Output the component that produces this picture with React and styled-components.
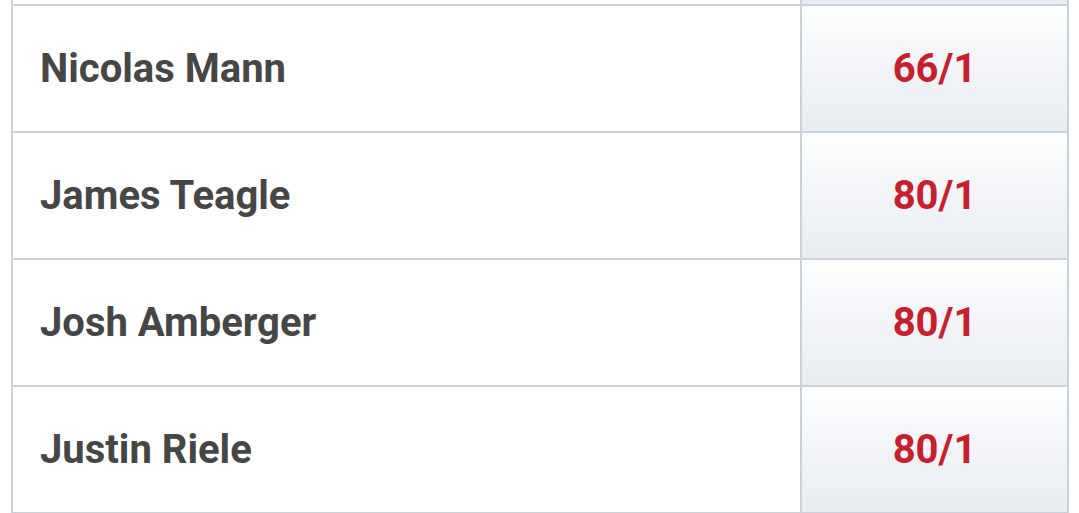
import React from "react";
import styled, { createGlobalStyle } from "styled-components";

const Global = createGlobalStyle`
  html, body { margin: 0; padding: 0; background: #ffffff; overflow: hidden; }
  body { font-family: Roboto, "Noto Sans", sans-serif; }
`;

const Viewport = styled.div`
  width: 1079px;
  height: 513px;
  overflow: hidden;
  background: #ffffff;
`;

const Table = styled.div`
  margin-left: 11px;
  width: 1058px;
  margin-top: -121px;
  border-left: 2px solid #c9d2da;
  border-right: 2px solid #c9d2da;
  box-sizing: border-box;
`;

const Row = styled.div`
  display: grid;
  grid-template-columns: 787px 1fr;
  height: 127px;
  box-sizing: border-box;
  border-bottom: 2px solid #c9d2da;
`;

const Name = styled.div`
  display: flex;
  align-items: center;
  padding-left: 27px;
  font-size: 40px;
  font-weight: 700;
  color: #464646;
`;

const Odds = styled.div`
  display: flex;
  align-items: center;
  justify-content: center;
  border-left: 2px solid #c9d2da;
  background: linear-gradient(to bottom, #ffffff 0%, #f3f5f8 45%, #e8ecf1 100%);
  font-size: 40px;
  font-weight: 700;
  color: #c6202e;
`;

const rows = [
  { name: "", odds: "" },
  { name: "Nicolas Mann", odds: "66/1" },
  { name: "James Teagle", odds: "80/1" },
  { name: "Josh Amberger", odds: "80/1" },
  { name: "Justin Riele", odds: "80/1" },
];

export default function App() {
  return (
    <Viewport>
      <Global />
      <Table>
        {rows.map((r, i) => (
          <Row key={i}>
            <Name>{r.name}</Name>
            <Odds>{r.odds}</Odds>
          </Row>
        ))}
      </Table>
    </Viewport>
  );
}
